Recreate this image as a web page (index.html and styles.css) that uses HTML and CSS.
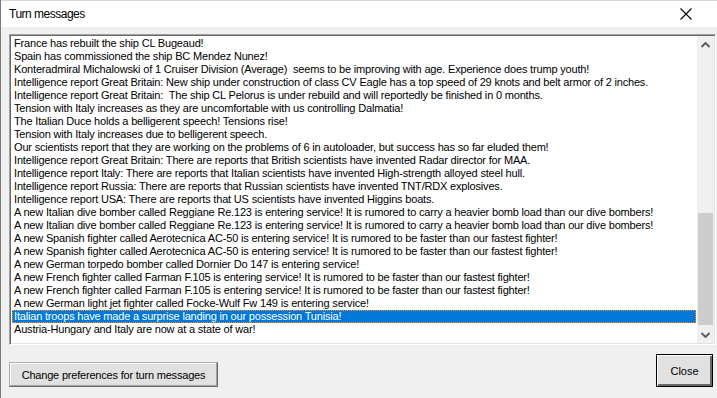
FILE: index.html
```html
<!DOCTYPE html>
<html>
<head>
<meta charset="utf-8">
<link rel="stylesheet" href="styles.css">
</head>
<body>
<div class="window">
  <div class="behind"></div>
  <div class="titlebar">
    <span class="title">Turn messages</span>
    <svg class="x" width="12" height="12" viewBox="0 0 12 12"><path d="M0.5 0.5 L11.5 11.5 M11.5 0.5 L0.5 11.5" stroke="#000" stroke-width="1.1" fill="none"/></svg>
  </div>
  <div class="content">
    <div class="listbox">
      <ul class="items">
        <li>France has rebuilt the ship CL Bugeaud!</li>
        <li>Spain has commissioned the ship BC Mendez Nunez!</li>
        <li>Konteradmiral Michalowski of 1 Cruiser Division (Average)&nbsp; seems to be improving with age. Experience does trump youth!</li>
        <li>Intelligence report Great Britain: New ship under construction of class CV Eagle has a top speed of 29 knots and belt armor of 2 inches.</li>
        <li>Intelligence report Great Britain:&nbsp; The ship CL Pelorus is under rebuild and will reportedly be finished in 0 months.</li>
        <li>Tension with Italy increases as they are uncomfortable with us controlling Dalmatia!</li>
        <li>The Italian Duce holds a belligerent speech! Tensions rise!</li>
        <li>Tension with Italy increases due to belligerent speech.</li>
        <li>Our scientists report that they are working on the problems of 6 in autoloader, but success has so far eluded them!</li>
        <li>Intelligence report Great Britain: There are reports that British scientists have invented Radar director for MAA.</li>
        <li>Intelligence report Italy: There are reports that Italian scientists have invented High-strength alloyed steel hull.</li>
        <li>Intelligence report Russia: There are reports that Russian scientists have invented TNT/RDX explosives.</li>
        <li>Intelligence report USA: There are reports that US scientists have invented Higgins boats.</li>
        <li>A new Italian dive bomber called Reggiane Re.123 is entering service! It is rumored to carry a heavier bomb load than our dive bombers!</li>
        <li>A new Italian dive bomber called Reggiane Re.123 is entering service! It is rumored to carry a heavier bomb load than our dive bombers!</li>
        <li>A new Spanish fighter called Aerotecnica AC-50 is entering service! It is rumored to be faster than our fastest fighter!</li>
        <li>A new Spanish fighter called Aerotecnica AC-50 is entering service! It is rumored to be faster than our fastest fighter!</li>
        <li>A new German torpedo bomber called Dornier Do 147 is entering service!</li>
        <li>A new French fighter called Farman F.105 is entering service! It is rumored to be faster than our fastest fighter!</li>
        <li>A new French fighter called Farman F.105 is entering service! It is rumored to be faster than our fastest fighter!</li>
        <li>A new German light jet fighter called Focke-Wulf Fw 149 is entering service!</li>
        <li class="sel">Italian troops have made a surprise landing in our possession Tunisia!</li>
        <li>Austria-Hungary and Italy are now at a state of war!</li>
      </ul>
      <div class="scrollbar">
        <div class="arrow up"><svg width="9" height="6" viewBox="0 0 9 6"><path d="M0.5 5 L4.5 1 L8.5 5" stroke="#606060" stroke-width="2" fill="none"/></svg></div>
        <div class="track"><div class="thumb"></div></div>
        <div class="arrow down"><svg width="9" height="6" viewBox="0 0 9 6"><path d="M0.5 1 L4.5 5 L8.5 1" stroke="#606060" stroke-width="2" fill="none"/></svg></div>
      </div>
    </div>
    <div class="buttons">
      <button class="btn prefs">Change preferences for turn messages</button>
      <button class="btn close">Close</button>
    </div>
  </div>
</div>
</body>
</html>
```
FILE: styles.css
```css
* { box-sizing: border-box; }
html, body { margin: 0; padding: 0; }
body {
  background: #f0f0f0;
  font-family: "Liberation Sans", Arial, sans-serif;
  font-size: 11px;
  color: #000;
}
.window {
  width: 717px;
  height: 398px;
  background: #f0f0f0;
  border-left: 1px solid #7a7a7a;
  overflow: hidden;
}
.behind {
  height: 2px;
  background: #d8d8d8;
  border-bottom: 1px solid #ffffff;
}
.titlebar {
  height: 25px;
  background: #ffffff;
  display: flex;
  align-items: center;
  justify-content: space-between;
  padding: 0 25px 2px 8px;
}
.title {
  font-family: "Liberation Sans", Arial, sans-serif;
  font-size: 12px;
  letter-spacing: -0.5px;
  color: #000;
}
.content {
  padding: 7px 1px 0 8px;
}
.listbox {
  height: 311px;
  display: flex;
  border-top: 1px solid #a0a0a0;
  border-left: 1px solid #a0a0a0;
  border-right: 1px solid #ffffff;
  border-bottom: 1px solid #ffffff;
  box-shadow: inset 1px 1px 0 #696969, inset -1px -1px 0 #e3e3e3;
  background: #fff;
  padding: 1px 1px 1px 1px;
}
.items {
  list-style: none;
  margin: 0;
  padding: 1px 1px 0 1px;
  flex: 1;
  background: #fff;
  letter-spacing: -0.18px;
}
.items li {
  height: 13px;
  line-height: 13px;
  padding-left: 2px;
  white-space: nowrap;
}
.items li.sel {
  background: #0078d7;
  color: #fff;
  outline: 1px dotted #ff8728;
  outline-offset: -1px;
}
.scrollbar {
  width: 17px;
  background: #f0f0f0;
  display: flex;
  flex-direction: column;
}
.arrow {
  height: 17px;
  display: flex;
  align-items: center;
  justify-content: center;
}
.track {
  flex: 1;
  display: flex;
  flex-direction: column;
  justify-content: flex-end;
  padding: 0 1px 1px 1px;
}
.thumb {
  height: 112px;
  background: #cdcdcd;
}
.buttons {
  display: flex;
  justify-content: space-between;
  align-items: flex-end;
  padding: 0 3px 0 0;
  margin-top: 9px;
}
.btn {
  font-family: "Liberation Sans", Arial, sans-serif;
  font-size: 11px;
  color: #000;
  background: #e1e1e1;
  padding: 0;
  margin: 0;
}
.prefs {
  width: 209px;
  height: 25px;
  letter-spacing: -0.2px;
  border: 1px solid #adadad;
  box-shadow: inset -1px -1px 0 #a0a0a0, inset 1px 1px 0 #fff;
  border-right-color: #696969;
  border-bottom-color: #696969;
}
.close {
  width: 57px;
  height: 33px;
  border: 1px solid #000;
  box-shadow: inset 1px 1px 0 #fff, inset -2px -2px 0 #696969;
}
```
